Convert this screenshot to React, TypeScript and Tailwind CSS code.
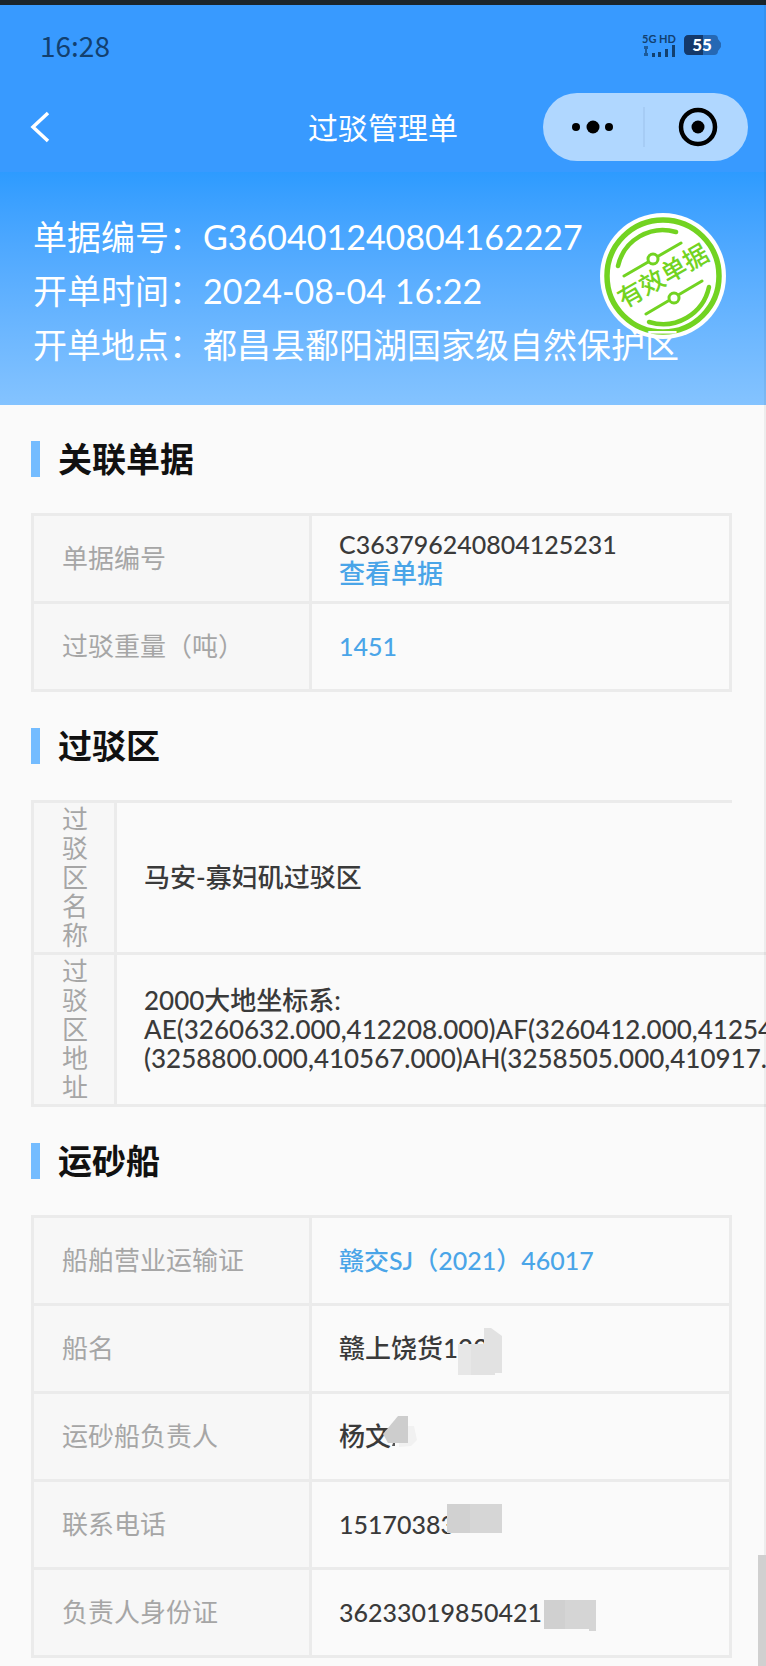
import React from "react";

type Row = {
  label: string;
  value: React.ReactNode;
};

const summary = [
  { label: "单据编号：", value: "G360401240804162227" },
  { label: "开单时间：", value: "2024-08-04 16:22" },
  { label: "开单地点：", value: "都昌县鄱阳湖国家级自然保护区" },
];

const relatedRows: Row[] = [
  {
    label: "单据编号",
    value: (
      <>
        <span className="block text-[25px]">C363796240804125231</span>
        <a href="#document" className="block text-[#4aa5e8]">
          查看单据
        </a>
      </>
    ),
  },
  {
    label: "过驳重量（吨）",
    value: <span className="text-[25px] text-[#4aa5e8]">1451</span>,
  },
];

const areaRows: Row[] = [
  { label: "过驳区名称", value: "马安-寡妇矶过驳区" },
  {
    label: "过驳区地址",
    value: (
      <>
        <span className="block">2000大地坐标系:</span>
        <span className="block">
          AE(3260632.000,412208.000)AF(3260412.000,412549.000)AG
        </span>
        <span className="block">
          (3258800.000,410567.000)AH(3258505.000,410917.000)
        </span>
      </>
    ),
  },
];

const shipRows: Row[] = [
  {
    label: "船舶营业运输证",
    value: (
      <a href="#certificate" className="text-[25px] text-[#4aa5e8]">
        赣交SJ（2021）46017
      </a>
    ),
  },
  {
    label: "船名",
    value: (
      <div className="relative">
        赣上饶货122
        <svg className="absolute -top-1.5 left-[119px]" width="44" height="47" aria-hidden="true">
          <path d="M0 16H26V0H33L44 8V45H37V47H0Z" fill="#e2e2e2" />
          <path d="M0 16H13V47H0Z" fill="#e7e7e7" />
        </svg>
      </div>
    ),
  },
  {
    label: "运砂船负责人",
    value: (
      <div className="relative">
        杨文
        <svg className="absolute -top-1.5 left-11" width="34" height="34" aria-hidden="true">
          <path d="M25 10H31L34 24L28 30L16 31V27H25Z" fill="#f1f1f1" />
          <path d="M15 0H25V27H5L0 18Z" fill="#cdcdcd" />
          <path d="M10 27H12V30H9Z" fill="#555" />
        </svg>
      </div>
    ),
  },
  {
    label: "联系电话",
    value: (
      <div className="relative text-[25px]">
        15170383
        <svg className="absolute -top-1.5 left-[108px]" width="55" height="29" aria-hidden="true">
          <path d="M0 0H55V29H0Z" fill="#d6d6d6" />
          <path d="M0 0H23V29H0Z" fill="#d1d1d1" />
        </svg>
      </div>
    ),
  },
  {
    label: "负责人身份证",
    value: (
      <div className="relative text-[25px]">
        36233019850421
        <svg className="absolute top-0.5 left-[205px]" width="52" height="31" aria-hidden="true">
          <path d="M0 0H52V31H45V29H0Z" fill="#d5d5d5" />
          <path d="M0 0H21V29H0Z" fill="#d0d0d0" />
        </svg>
      </div>
    ),
  },
];

function Stamp() {
  return (
    <svg
      className="absolute top-[41px] right-10"
      width="126"
      height="126"
      viewBox="-63 -63 126 126"
      role="img"
      aria-label="有效单据"
    >
      <circle r="63" fill="#fff" />
      <g fill="none" stroke="#72d321" strokeLinecap="round">
        <circle r="56" strokeWidth="5.5" />
        <path d="M-45 -10A46 46 0 0 1 13 -44" strokeWidth="4.5" />
        <path d="M46 11A47 47 0 0 1 -14 46" strokeWidth="4.5" />
        <path d="M-39 0L18 -33M-17 38L39 5" strokeWidth="3" />
        <circle cx="-10" cy="-17" r="5" fill="#fff" strokeWidth="3" />
        <circle cx="11" cy="22" r="5" fill="#fff" strokeWidth="3" />
      </g>
      <text
        transform="rotate(-30)"
        x="0"
        y="9"
        textAnchor="middle"
        fontSize="25"
        fontWeight="500"
        fill="#72d321"
      >
        有效单据
      </text>
    </svg>
  );
}

function StatusBar() {
  return (
    <div className="flex h-20 items-center justify-between pr-11 pl-10 text-[#12406f]">
      <span className="font-['Noto_Sans_CJK_SC',sans-serif] text-[28px] leading-8">16:28</span>
      <div className="flex items-center gap-2">
        <div className="flex flex-col items-center">
          <span className="text-[11px] leading-3 font-bold">5G HD</span>
          <svg width="34" height="12" fill="currentColor" aria-hidden="true">
            <path d="M2 1H6V4H2ZM2 8H6V11H2ZM3 4H5V8H3Z" opacity="0.7" />
            <path d="M10 8H13V12H10ZM16 7H19V12H16ZM23 4H26V12H23ZM30 0H33V12H30Z" />
          </svg>
        </div>
        <svg width="38" height="20" aria-hidden="true">
          <path d="M5 0H30Q34 0 34 4L37 8V12L34 16Q34 20 30 20H5Q0 20 0 15V5Q0 0 5 0Z" fill="#2568b4" />
          <path d="M5 0H19V20H5Q0 20 0 15V5Q0 0 5 0Z" fill="#14396a" />
          <text x="18" y="16" textAnchor="middle" fontSize="17" fontWeight="900" fill="#fff">
            55
          </text>
        </svg>
      </div>
    </div>
  );
}

function NavBar() {
  return (
    <nav className="mt-2 grid grid-cols-[1fr_auto_1fr] items-center px-[18px] pb-[11px]">
      <button type="button" aria-label="返回" className="w-10 pl-3">
        <svg width="20" height="32" fill="none" stroke="#fff" strokeWidth="3.5" aria-hidden="true">
          <path d="M18 2L3 16L18 30" />
        </svg>
      </button>
      <h1 className="text-[30px] leading-9 text-white">过驳管理单</h1>
      <div className="flex h-17 w-[205px] items-center justify-self-end rounded-full bg-[#b0d7ff]">
        <button type="button" aria-label="更多" className="flex flex-1 justify-center">
          <svg width="44" height="16" aria-hidden="true">
            <circle cx="5" cy="8" r="4" />
            <circle cx="22" cy="8" r="6.5" />
            <circle cx="38" cy="8" r="4" />
          </svg>
        </button>
        <span className="h-10 w-0.5 bg-[#a6ccf5]" />
        <button type="button" aria-label="关闭" className="flex flex-1 justify-center pl-1">
          <svg width="40" height="40" aria-hidden="true">
            <circle cx="20" cy="20" r="17" fill="none" stroke="#000" strokeWidth="4.5" />
            <circle cx="20" cy="20" r="6.5" />
          </svg>
        </button>
      </div>
    </nav>
  );
}

function SectionTitle({ children }: { children: React.ReactNode }) {
  return (
    <h2 className="my-9 flex items-center gap-[18px] text-[34px] leading-9 font-bold text-[#111]">
      <span className="h-9 w-[9px] bg-[#74bcff]" />
      {children}
    </h2>
  );
}

function InfoTable({ rows }: { rows: Row[] }) {
  return (
    <table className="w-full table-fixed border-separate border-spacing-0 border-t-3 border-l-3 border-[#ebebeb]">
      <tbody>
        {rows.map((row) => (
          <tr key={row.label} className="h-22">
            <th
              scope="row"
              className="w-[278px] border-r-3 border-b-3 border-[#ebebeb] bg-[#f7f7f7] px-7 text-left font-normal text-[#a6a6a6]"
            >
              {row.label}
            </th>
            <td className="border-r-3 border-b-3 border-[#ebebeb] px-[27px] font-medium">
              {row.value}
            </td>
          </tr>
        ))}
      </tbody>
    </table>
  );
}

// The address does not wrap, so the rows run past the frame on the right
function AreaTable({ rows }: { rows: Row[] }) {
  return (
    <div className="border-t-3 border-l-3 border-[#ebebeb]">
      <table className="w-max border-separate border-spacing-0">
        <tbody>
          {rows.map((row) => (
            <tr key={row.label} className="h-[152px]">
              <th
                scope="row"
                className="border-r-3 border-b-3 border-[#ebebeb] bg-[#f7f7f7] pr-[26px] pl-7 text-left font-normal text-[#a6a6a6]"
              >
                <span className="block w-[26px]">{row.label}</span>
              </th>
              <td className="border-r-3 border-b-3 border-[#ebebeb] px-[27px] font-medium whitespace-nowrap">
                {row.value}
              </td>
            </tr>
          ))}
        </tbody>
      </table>
    </div>
  );
}

export default function App() {
  return (
    <div className="relative overflow-x-clip bg-[#fafafa] font-['Lato','Noto_Sans_CJK_SC',sans-serif]">
      <header>
        <div className="h-[5px] bg-[#1b252c]" />
        <div className="bg-[#389aff]">
          <StatusBar />
          <NavBar />
        </div>
        <div className="relative bg-linear-to-b from-[#2d9bff] to-[#84c3ff] pt-[38px] pb-[33px] pl-[33px]">
          <Stamp />
          <dl className="relative text-[34px] leading-[54px] text-white">
            {summary.map((item) => (
              <div key={item.label} className="flex">
                <dt>{item.label}</dt>
                <dd>{item.value}</dd>
              </div>
            ))}
          </dl>
        </div>
      </header>

      <main className="flow-root pr-[34px] pb-2 pl-[31px] text-[26px] leading-[29px] text-[#3a3a3a]">
        <SectionTitle>关联单据</SectionTitle>
        <InfoTable rows={relatedRows} />
        <SectionTitle>过驳区</SectionTitle>
        <AreaTable rows={areaRows} />
        <SectionTitle>运砂船</SectionTitle>
        <InfoTable rows={shipRows} />
      </main>

      {/* page edge and scroll thumb */}
      <div className="absolute inset-y-0 right-0 w-0.5 bg-black/5" />
      <div className="absolute right-0 bottom-0 h-[111px] w-2 bg-[#d0d0d0]" />
    </div>
  );
}
